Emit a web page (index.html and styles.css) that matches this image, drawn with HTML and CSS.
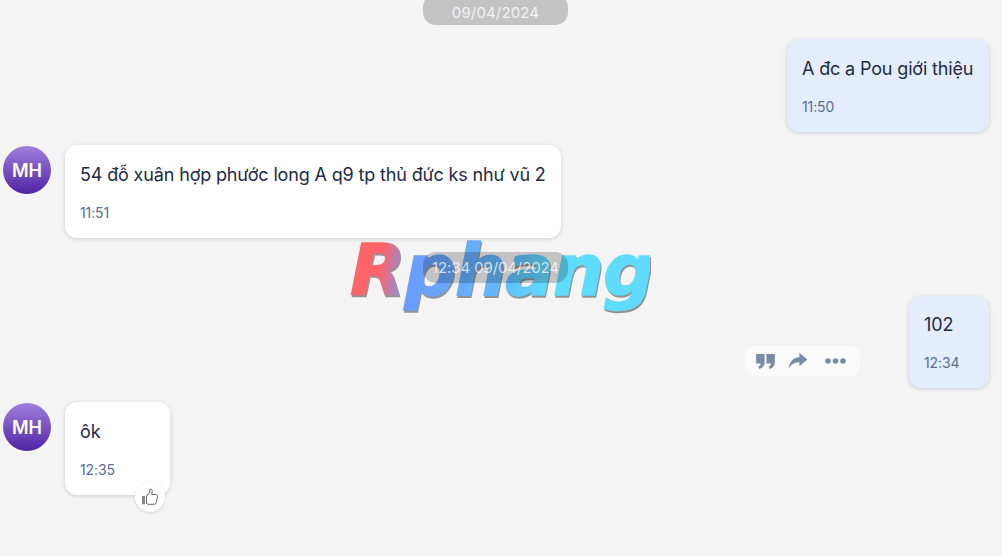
FILE: index.html
```html
<!DOCTYPE html>
<html lang="vi">
<head>
<meta charset="utf-8">
<title>Chat</title>
<link rel="stylesheet" href="styles.css">
</head>
<body>
<main class="chat">
  <div class="date date-first">09/04/2024</div>

  <div class="row row-out">
    <div class="bubble bubble-out bubble-wide">
      <p class="msg">A đc a Pou giới thiệu</p>
      <time class="time">11:50</time>
    </div>
  </div>

  <div class="row row-in">
    <div class="avatar">MH</div>
    <div class="bubble">
      <p class="msg">54 đỗ xuân hợp phước long A q9 tp thủ đức ks như vũ 2</p>
      <time class="time">11:51</time>
    </div>
  </div>

  <div class="date">12:34 09/04/2024</div>

  <div class="row row-out">
    <div class="toolbar">
      <svg class="tool" width="19" height="15" viewBox="0 0 20 16"><path d="M0 0h9v8.500c0 3.800-2 6.300-5.600 7.500L2.300 13.600C4 12.900 4.700 11.800 4.800 10H0zM11 0h9v8.500c0 3.800-2 6.300-5.600 7.500l-1.100-2.400c1.700-.7 2.400-1.800 2.500-3.600H11z"/></svg>
      <svg class="tool tool-share" width="20" height="16" viewBox="0 0 20 17"><path d="M11.500 0 20 7l-8.500 7V9.800C6.500 9.800 3 11.500 0 17 .6 10 4.500 4.800 11.500 4.200z"/></svg>
      <svg class="tool tool-more" width="21" height="6" viewBox="0 0 21 6"><circle cx="3" cy="3" r="2.800"/><circle cx="10.500" cy="3" r="2.800"/><circle cx="18" cy="3" r="2.800"/></svg>
    </div>
    <div class="bubble bubble-out bubble-short">
      <p class="msg">102</p>
      <time class="time">12:34</time>
    </div>
  </div>

  <div class="row row-in">
    <div class="avatar">MH</div>
    <div class="bubble bubble-reacted">
      <p class="msg">ôk</p>
      <time class="time">12:35</time>
      <span class="reaction">
        <svg width="18" height="18" viewBox="0 0 18 18" fill="none" stroke="#666" stroke-width="1" stroke-linejoin="round"><path d="M5.500 8 8.600 4.500 9 1.200c1.500-.4 2.400.6 2.200 2.200L10.700 6.500h4.300c1.200 0 1.900 1 1.600 2.100l-1.500 6.300c-.2.900-.9 1.400-1.800 1.400H7.500c-.8 0-1.400-.3-2-.8z"/><path d="M1 8h3v8.300H1z" fill="#888" stroke="none"/></svg>
      </span>
    </div>
  </div>
</main>
<div class="watermark">Rphang</div>
</body>
</html>
```

FILE: styles.css
```css
* { box-sizing: border-box; }

html, body {
  margin: 0;
  height: 100%;
  overflow: hidden;
  background: #f4f4f4;
}

body {
  position: relative;
  font-family: Inter, "Noto Sans", sans-serif;
  color: #1d2b44;
}

.chat {
  position: relative;
  z-index: 1;
  display: flex;
  flex-direction: column;
  gap: 13.5px;
  padding: 0 13px 0 2px;
}

.date {
  align-self: center;
  width: 145px;
  height: 31px;
  border-radius: 13px;
  background: rgba(0, 0, 0, 0.2);
  color: rgba(255, 255, 255, 0.72);
  font-size: 15px;
  line-height: 32px;
  text-align: center;
  letter-spacing: -0.12px;
  white-space: nowrap;
}

.date-first {
  margin-top: -6px;
  color: rgba(255, 255, 255, 0.8);
  line-height: 37px;
  letter-spacing: 0.15px;
}

.row {
  display: flex;
  align-items: flex-start;
}

.row-out {
  justify-content: flex-end;
  align-items: flex-end;
}

.row-in {
  gap: 14px;
  padding-left: 1px;
}

.avatar {
  flex: none;
  width: 48px;
  height: 48px;
  margin-top: 1px;
  border-radius: 50%;
  background: linear-gradient(#a07fdc, #4f24a5);
  color: #fff;
  font-size: 18px;
  font-weight: 600;
  line-height: 49px;
  text-align: center;
}

.bubble {
  position: relative;
  height: 93px;
  padding: 16px 15px 0;
  border-radius: 12px;
  background: #fff;
  box-shadow: 0 1px 4px rgba(0, 0, 0, 0.16);
}

.bubble-out {
  background: #e4edfd;
}

.bubble-wide {
  width: 202px;
}

.bubble-short {
  width: 80px;
  height: 92px;
  padding-top: 15px;
}

.bubble-reacted {
  width: 105px;
}

.msg {
  margin: 0 0 15px;
  font-size: 18px;
  line-height: 28px;
  letter-spacing: -0.15px;
  white-space: nowrap;
}

.time {
  display: block;
  color: #5a6e92;
  font-size: 14px;
  line-height: 18px;
  letter-spacing: -0.1px;
}

.toolbar {
  display: flex;
  align-items: center;
  width: 115px;
  height: 30px;
  margin: 0 49px 12px 0;
  padding: 0 0 0 11px;
  border-radius: 9px;
  background: #fafafa;
}

.tool {
  flex: none;
  fill: #7a8ba8;
}

.tool-share {
  margin-left: 13px;
  margin-top: -1px;
}

.tool-more {
  margin-left: 17px;
}

.reaction {
  position: absolute;
  right: 5px;
  bottom: -17px;
  display: flex;
  align-items: center;
  justify-content: center;
  width: 30px;
  height: 30px;
  border-radius: 50%;
  background: #fff;
  box-shadow: 0 1px 3px rgba(0, 0, 0, 0.15);
}

.watermark {
  position: absolute;
  left: 350px;
  top: 225px;
  width: 300px;
  background: linear-gradient(100deg, #ff6468 0%, #ff6468 12%, #6a9cff 22%, #63b8fb 50%, #5fdcfc 66%, #5fdcfc 100%);
  -webkit-background-clip: text;
  background-clip: text;
  color: transparent;
  -webkit-text-stroke: 1.5px transparent;
  font-family: "DejaVu Sans", sans-serif;
  font-size: 72px;
  font-style: italic;
  font-weight: 700;
  line-height: 90px;
  letter-spacing: -1px;
  white-space: nowrap;
  filter: drop-shadow(1px 2px 0 rgba(80, 80, 80, 0.6));
}
```
